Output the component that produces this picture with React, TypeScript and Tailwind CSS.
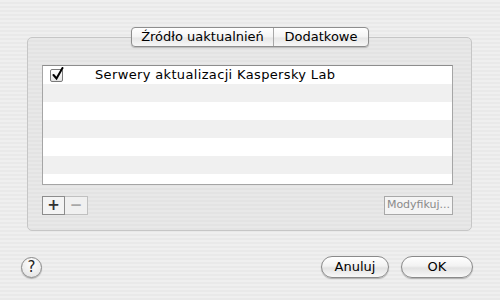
import React from "react";

const font = { fontFamily: '"DejaVu Sans", "Liberation Sans", sans-serif' };

function AquaButton({ children, className }: { children: React.ReactNode; className: string }) {
  return (
    <button
      className={`flex items-center justify-center rounded-full border border-[#8a8a8a] bg-[linear-gradient(#ffffff,#f2f2f2_45%,#e2e2e2_55%,#f8f8f8)] shadow-[0_1px_1px_rgba(0,0,0,0.25)] text-[13px] text-black ${className}`}
    >
      {children}
    </button>
  );
}

export default function App() {
  const rows = [0, 1, 2, 3, 4, 5, 6];
  return (
    <div
      style={font}
      className="w-[500px] h-[300px] flex flex-col bg-[repeating-linear-gradient(#efefef_0px,#efefef_2px,#e9e9e9_2px,#e9e9e9_4px)] overflow-hidden"
    >
      {/* Tabs */}
      <div className="relative z-10 flex justify-center mt-[27px]">
        <div className="flex h-[20px] rounded-[4px] border border-[#8e8e8e] bg-[linear-gradient(#ffffff,#f4f4f4_50%,#e6e6e6_55%,#f7f7f7)] shadow-[0_1px_1px_rgba(0,0,0,0.2)] text-[13px] text-black">
          <div className="flex items-center w-[142px] justify-center border-r border-[#a8a8a8]">Źródło uaktualnień</div>
          <div className="flex items-center w-[94px] justify-center">Dodatkowe</div>
        </div>
      </div>

      {/* Group box */}
      <div className="-mt-[10px] ml-[27px] mr-[28px] h-[194px] rounded-[5px] border border-[#c6c6c6] bg-[repeating-linear-gradient(#e8e8e8_0px,#e8e8e8_2px,#e3e3e3_2px,#e3e3e3_4px)] flex flex-col pt-[27px] pl-[14px] pr-[18px]">
        <div className="h-[120px] border border-[#a5a5a5] border-t-[#8d8d8d] bg-white flex flex-col overflow-hidden">
          {rows.map((i) => (
            <div
              key={i}
              className={`h-[18px] shrink-0 flex items-center text-[13px] ${i % 2 === 1 ? "bg-[#f0f0f0]" : "bg-white"}`}
            >
              {i === 0 && (
                <>
                  <div className="relative ml-[7px] w-[13px] h-[13px] rounded-[2px] border border-[#7a7a7a] bg-[linear-gradient(#ffffff,#e4e4e4)]">
                    <svg className="absolute -top-[3px] left-[1px]" width="12" height="14" viewBox="0 0 12 14">
                      <path d="M1.5 8 L4.5 11.5 L10.5 1" fill="none" stroke="#000" strokeWidth="2" strokeLinecap="round" />
                    </svg>
                  </div>
                  <span className="ml-[32px] tracking-[0.35px]">Serwery aktualizacji Kaspersky Lab</span>
                </>
              )}
            </div>
          ))}
        </div>
        <div className="flex items-center mt-[11px]">
          <div className="flex">
            <div className="w-[23px] h-[19px] border border-[#8c8c8c] bg-[#f4f4f4] flex items-center justify-center text-[15px] font-bold text-[#333] leading-none">+</div>
            <div className="w-[23px] h-[19px] border border-l-0 border-[#c0c0c0] bg-[#f0f0f0] flex items-center justify-center text-[15px] font-bold text-[#a8a8a8] leading-none">−</div>
          </div>
          <div className="ml-auto w-[69px] h-[19px] border border-[#a8a8a8] bg-[#f4f4f4] flex items-center justify-center text-[11px] text-[#8a8a8a]">Modyfikuj...</div>
        </div>
      </div>

      {/* Bottom bar */}
      <div className="flex items-center mt-[25px] pl-[21px] pr-[27px]">
        <div className="w-[21px] h-[21px] rounded-full border border-[#8a8a8a] bg-[radial-gradient(circle_at_50%_30%,#ffffff,#e0e0e0)] shadow-[0_1px_1px_rgba(0,0,0,0.25)] flex items-center justify-center text-[15px] text-[#222]">?</div>
        <AquaButton className="ml-auto w-[68px] h-[22px]">Anuluj</AquaButton>
        <AquaButton className="ml-[12px] w-[72px] h-[22px]">OK</AquaButton>
      </div>
    </div>
  );
}
